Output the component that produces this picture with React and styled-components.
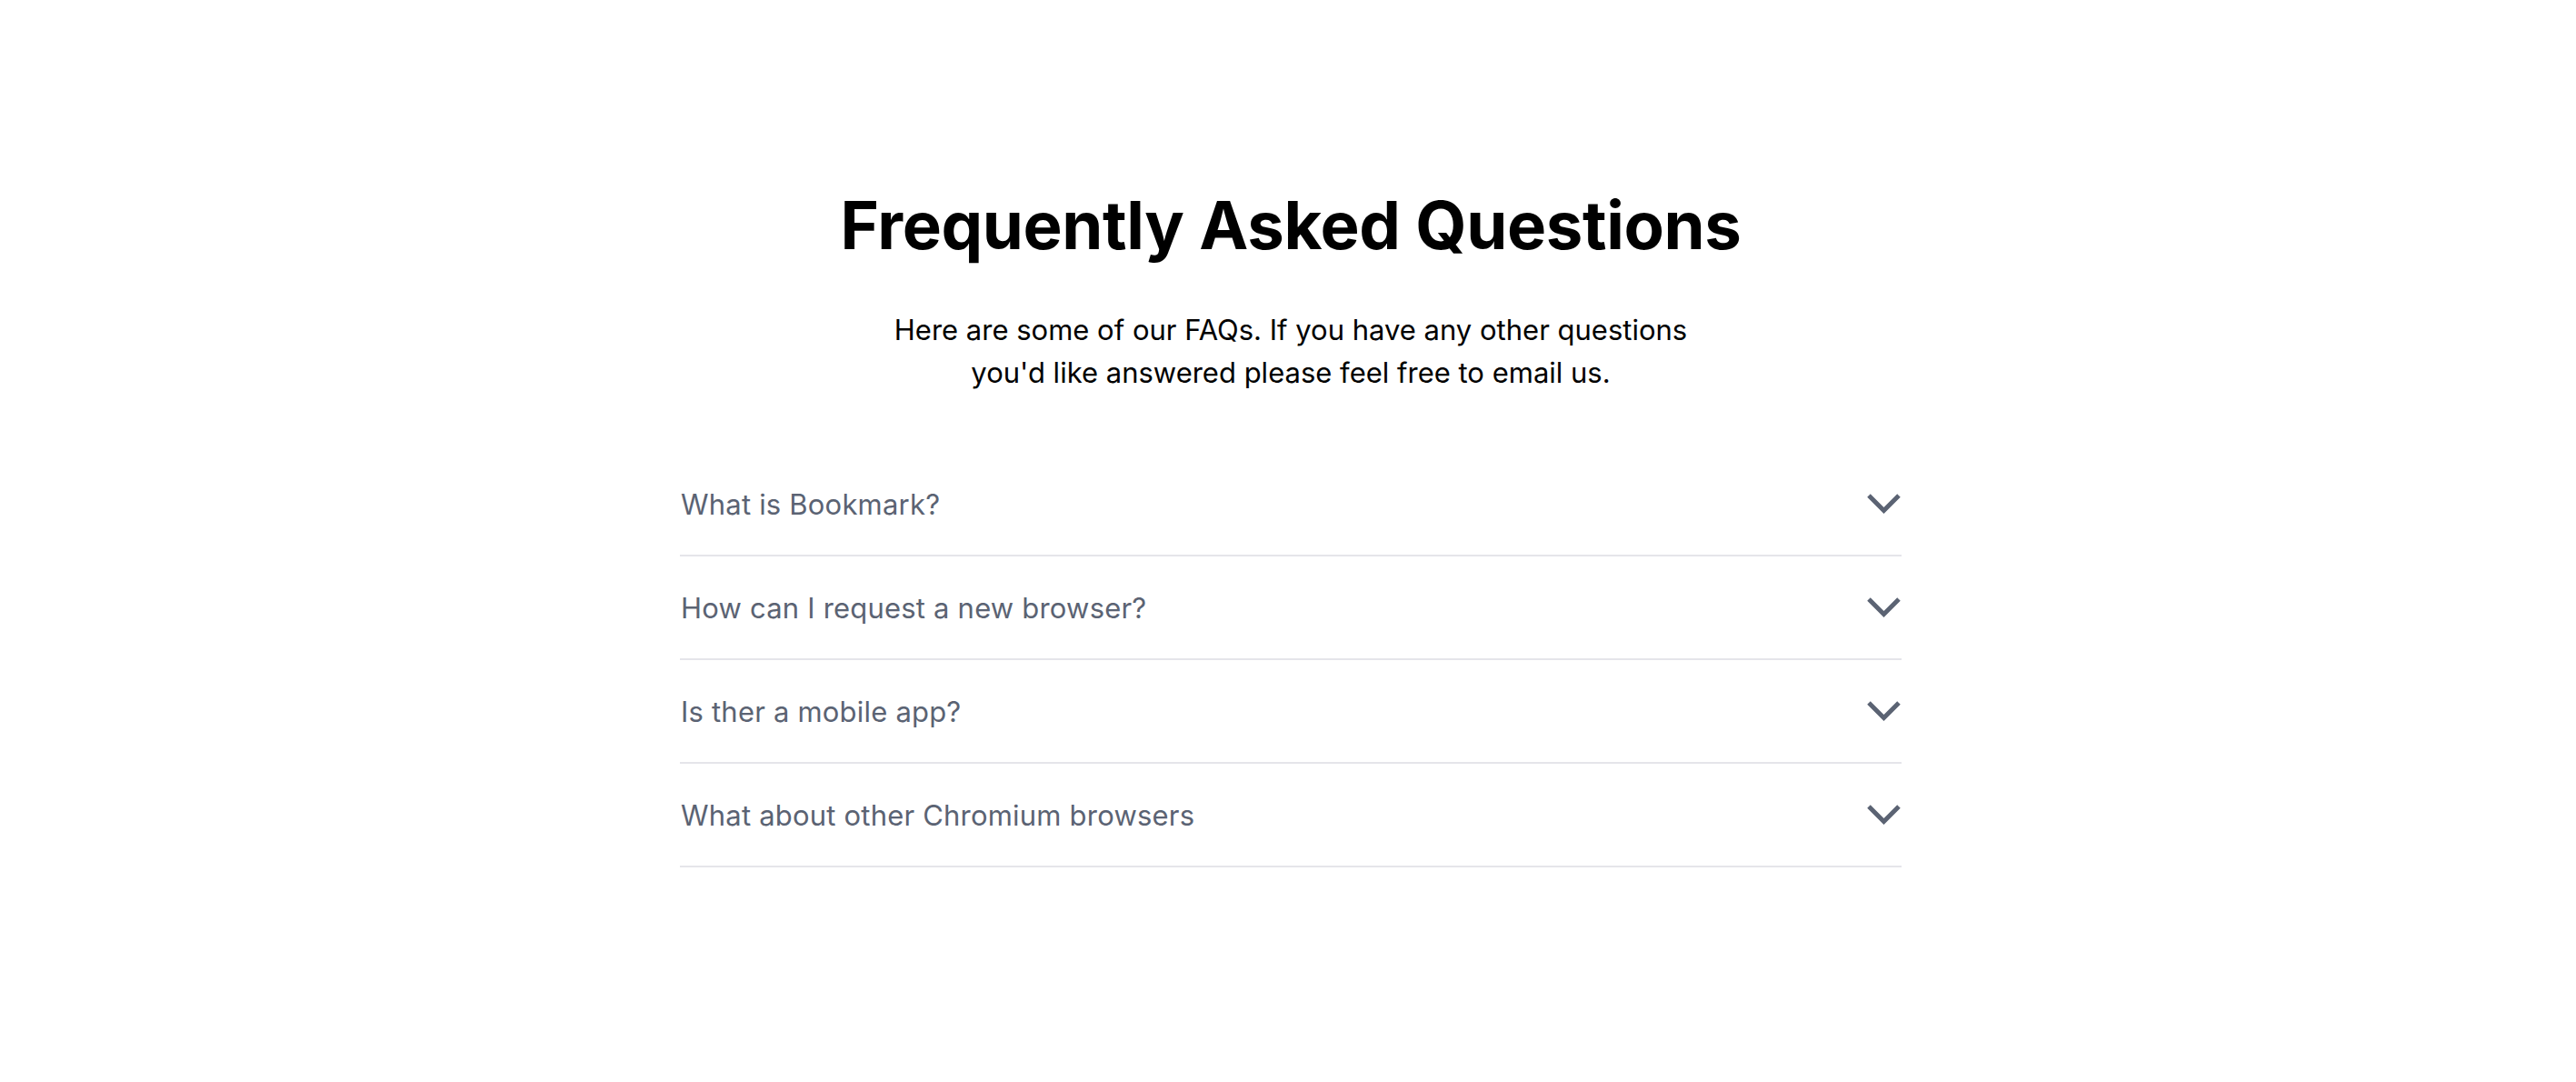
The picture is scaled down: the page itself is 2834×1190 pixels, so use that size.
import React from "react";
import styled, { createGlobalStyle } from "styled-components";

const GlobalStyle = createGlobalStyle`
  body {
    margin: 0;
    background: #fff;
    font-family: "Inter", "Open Sans", sans-serif;
  }
`;

const Section = styled.section`
  display: flex;
  flex-direction: column;
  align-items: center;
  padding: 205px 0 0 6px;
`;

const Title = styled.h2`
  margin: 0;
  font-size: 72.5px;
  font-weight: 700;
  line-height: 86px;
  color: #000;
  letter-spacing: -0.4px;
`;

const Intro = styled.p`
  margin: 48px 0 0;
  width: 940px;
  text-align: center;
  font-size: 31px;
  line-height: 47px;
  color: #000;
`;

const List = styled.div`
  width: 1344px;
  margin-top: 65px;
  display: flex;
  flex-direction: column;
`;

const Item = styled.div`
  height: 112px;
  display: flex;
  align-items: center;
  justify-content: space-between;
  border-bottom: 2px solid #e5e5ea;
`;

const Question = styled.span`
  font-size: 31px;
  letter-spacing: 0.2px;
  color: #5b6373;
  padding-left: 1px;
`;

const Chevron = styled.svg`
  width: 40px;
  height: 26px;
  color: #5b6373;
`;

const questions = [
  "What is Bookmark?",
  "How can I request a new browser?",
  "Is ther a mobile app?",
  "What about other Chromium browsers",
];

const ArrowDown = () => (
  <Chevron viewBox="0 0 40 26" fill="none">
    <path d="M4 4l16.5 16.5L37 4" stroke="currentColor" strokeWidth="5" />
  </Chevron>
);

const App = () => (
  <>
    <GlobalStyle />
    <Section>
      <Title>Frequently Asked Questions</Title>
      <Intro>
        Here are some of our FAQs. If you have any other questions you'd like
        answered please feel free to email us.
      </Intro>
      <List>
        {questions.map((q) => (
          <Item key={q}>
            <Question>{q}</Question>
            <ArrowDown />
          </Item>
        ))}
      </List>
    </Section>
  </>
);

export default App;
